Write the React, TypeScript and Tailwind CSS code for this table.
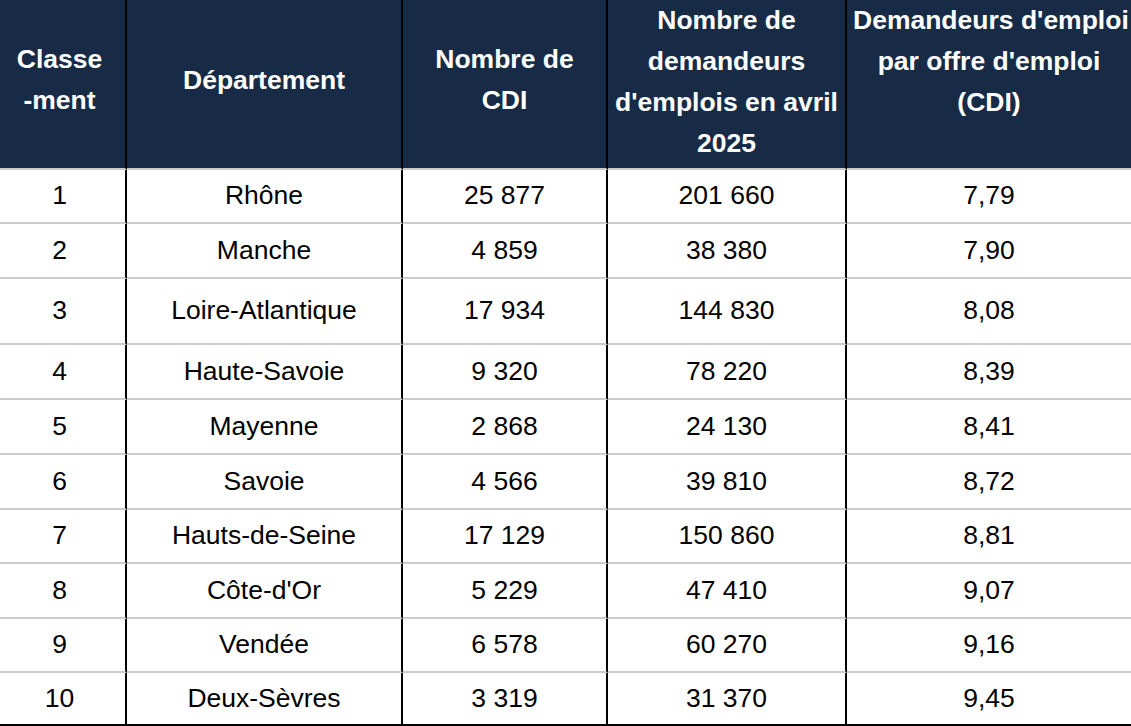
import React from "react";

const rows = [
  { rank: "1", dep: "Rhône", cdi: "25 877", dem: "201 660", ratio: "7,79", h: "h-[54px]" },
  { rank: "2", dep: "Manche", cdi: "4 859", dem: "38 380", ratio: "7,90", h: "h-[55px]" },
  { rank: "3", dep: "Loire-Atlantique", cdi: "17 934", dem: "144 830", ratio: "8,08", h: "h-[66px]" },
  { rank: "4", dep: "Haute-Savoie", cdi: "9 320", dem: "78 220", ratio: "8,39", h: "h-[55px]" },
  { rank: "5", dep: "Mayenne", cdi: "2 868", dem: "24 130", ratio: "8,41", h: "h-[55px]" },
  { rank: "6", dep: "Savoie", cdi: "4 566", dem: "39 810", ratio: "8,72", h: "h-[55px]" },
  { rank: "7", dep: "Hauts-de-Seine", cdi: "17 129", dem: "150 860", ratio: "8,81", h: "h-[54px]" },
  { rank: "8", dep: "Côte-d'Or", cdi: "5 229", dem: "47 410", ratio: "9,07", h: "h-[55px]" },
  { rank: "9", dep: "Vendée", cdi: "6 578", dem: "60 270", ratio: "9,16", h: "h-[54px]" },
  { rank: "10", dep: "Deux-Sèvres", cdi: "3 319", dem: "31 370", ratio: "9,45", h: "h-[53px]" },
];

export default function App() {
  const th =
    "h-[170px] border-r-2 border-r-black border-b-2 border-b-[#cccccc] px-1.5 align-middle text-center font-bold leading-[41px] text-white";
  const td = "border-r-2 border-r-black px-1.5 align-middle text-center";

  return (
    <div className="w-[1131px] h-[726px] overflow-hidden bg-white font-['Liberation_Sans',Arial,sans-serif] text-[26.5px] text-black">
      <table className="w-[1131px] table-fixed border-separate border-spacing-0">
        <colgroup>
          <col className="w-[127px]" />
          <col className="w-[276px]" />
          <col className="w-[205px]" />
          <col className="w-[239px]" />
          <col className="w-[284px]" />
        </colgroup>
        <thead>
          <tr className="h-[170px] bg-[#172b46]">
            <th className={`${th} pb-2 pr-3`}>
              Classe
              <br />
              -ment
            </th>
            <th className={`${th} pb-2`}>Département</th>
            <th className={`${th} pb-2`}>
              Nombre de
              <br />
              CDI
            </th>
            <th className={`${th} pb-1`}>
              Nombre de
              <br />
              demandeurs
              <br />
              d'emplois en avril
              <br />
              2025
            </th>
            <th className="h-[170px] border-b-2 border-b-[#cccccc] px-1.5 pt-0 align-top text-center font-bold leading-[41px] text-white whitespace-nowrap">
              Demandeurs d'emploi
              <br />
              par offre d'emploi
              <br />
              (CDI)
            </th>
          </tr>
        </thead>
        <tbody>
          {rows.map((r, i) => {
            const last = i === rows.length - 1;
            const bottom = last ? "border-b-2 border-b-black" : "border-b-2 border-b-[#cccccc]";
            return (
              <tr key={r.rank} className={r.h}>
                <td className={`${td} pr-3 ${bottom}`}>{r.rank}</td>
                <td className={`${td} ${bottom}`}>{r.dep}</td>
                <td className={`${td} ${bottom}`}>{r.cdi}</td>
                <td className={`${td} ${bottom}`}>{r.dem}</td>
                <td className={`px-1.5 align-middle text-center ${bottom}`}>{r.ratio}</td>
              </tr>
            );
          })}
        </tbody>
      </table>
    </div>
  );
}
